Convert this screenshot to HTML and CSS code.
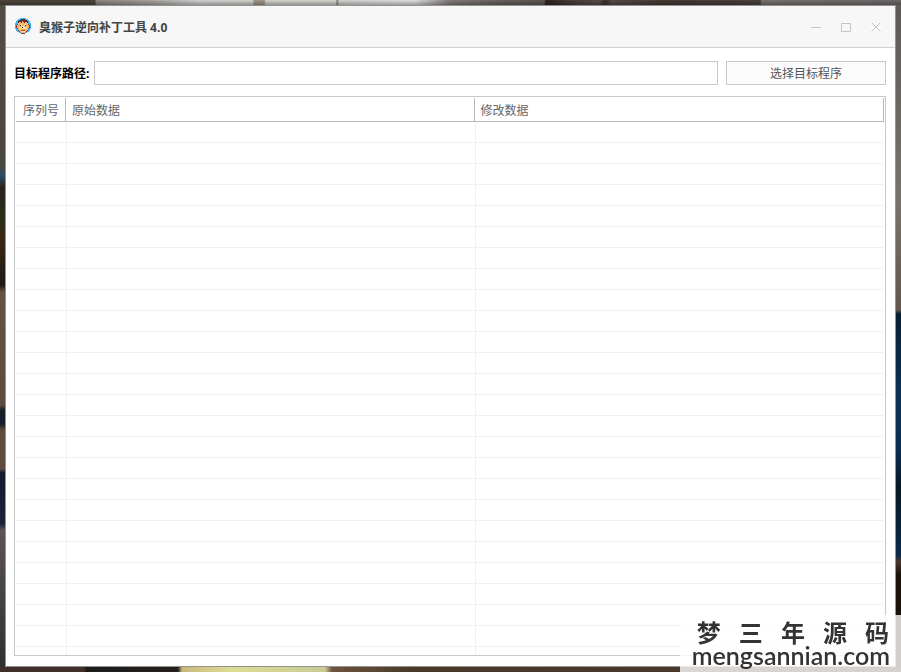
FILE: index.html
```
<!DOCTYPE html>
<html lang="zh-CN">
<head>
  <meta charset="UTF-8">
  <title>臭猴子逆向补丁工具 4.0</title>
  <meta name="viewport" content="width=device-width, initial-scale=1.0">
  <link rel="stylesheet" href="styles.css">
</head>
<body>

  <main class="window">
    <header class="titlebar">
      <svg class="logo" viewBox="0 0 16 16" shape-rendering="crispEdges" aria-hidden="true">
        <path fill="#3fb4f5" d="M5 0h6v1h2v1h1v1h1v2h1v6h-1v2h-1v1h-2v1h-2v1H6v-1H4v-1H2v-1H1v-2H0V5h1V3h1V2h1V1h2z"/>
        <path fill="#f6b46c" d="M4 3h8v2h1v2h1v3h-1v2h-1v2h-2v1H6v-1H4v-2H3v-2H2V7h1V5h1z"/>
        <path fill="#ffdc9c" d="M5 6h2v2H5zM9 6h2v2H9zM4 9h3v2H4zM9 9h3v2H9zM7 8h2v3H7zM6 13h4v1H6z"/>
        <path fill="#6b2a2a" d="M6 1h4v1h2v1h1v2h-1v-1h-2v1H9V4H8V3H7v2H6V4H4v1H3V3h1V2h2z"/>
        <path fill="#8f3c22" d="M2 6h1v1H2zM13 6h1v1h-1zM1 7h1v3H1zM14 7h1v3h-1zM2 10h1v1H2zM13 10h1v1h-1zM3 12h1v1H3zM12 12h1v1h-1zM4 13h1v1H4zM11 13h1v1h-1zM6 15h4v1H6z"/>
        <path fill="#3c1c1c" d="M5 7h1v1H5zM10 7h1v1h-1zM7 9h1v1H7z"/>
        <path fill="#b4482c" d="M6 12h4v1H6z"/>
      </svg>
      <h1 class="title">臭猴子逆向补丁工具 4.0</h1>
      <div class="controls">
        <button type="button" class="control" aria-label="最小化">
          <svg viewBox="0 0 10 10"><path d="M0 5.5h10"/></svg>
        </button>
        <button type="button" class="control" aria-label="最大化">
          <svg viewBox="0 0 10 10"><path d="M.5 1.5h9v8h-9z"/></svg>
        </button>
        <button type="button" class="control" aria-label="关闭">
          <svg viewBox="0 0 10 10"><path d="M.5 .5l9 9M9.5 .5l-9 9"/></svg>
        </button>
      </div>
    </header>

    <div class="toolbar">
      <label class="path-label" for="path">目标程序路径:</label>
      <input class="path" type="text" id="path">
      <button type="button" class="choose">选择目标程序</button>
    </div>

    <div class="list">
      <table class="grid">
        <colgroup>
          <col class="col-index">
          <col>
          <col>
        </colgroup>
        <thead>
          <tr><th>序列号</th><th>原始数据</th><th>修改数据</th></tr>
        </thead>
        <tbody id="rows"></tbody>
      </table>
    </div>
  </main>

  <div class="watermark">
    <div class="mark-name"><span>梦</span><span>三</span><span>年</span><span>源</span><span>码</span></div>
    <div class="mark-site">mengsannian.com</div>
  </div>

<script>
// Fill the list with empty rows, the last one is cut off by the frame
const rows = document.getElementById('rows');
const count = Math.ceil(rows.closest('.list').clientHeight / 21);

for (let i = 0; i < count; i++) {
  const row = rows.insertRow();
  for (let j = 0; j < 3; j++) row.insertCell();
}
</script>

</body>
</html>
```

FILE: styles.css
```
* {
  box-sizing: border-box;
}
body {
  display: flex;
  height: 100vh;
  margin: 0;
  padding: 5px;
  overflow: hidden;
  font-family: "Open Sans", "Noto Sans CJK SC", sans-serif;
  font-size: 12px;
  /* desktop wallpaper seen round the window: shadow first, then top, bottom, left, right */
  background:
    linear-gradient(transparent, rgba(0, 0, 0, 0.3)) top / 100% 5px no-repeat,
    linear-gradient(90deg, #4e463d 95px, #8d8580 96px, #a8a39e 150px, #d0d2d0 200px, #d0d0cb 253px, #a09688 254px, #a09688 264px, #d4d4cc 266px, #d4d4cc 336px, #77705f 337px, #d0d2cf 339px, #e0e0e0 415px, #827c7a 450px, #686260 500px, #5c574f 544px, #30211e 546px, #4a3c3a 570px, #594a4a 600px, #3c302b 605px, #594a4a 612px, #453832 660px, #4b413b 760px, #777370 762px, #6d6968 100%) top / 100% 5px no-repeat,
    linear-gradient(90deg, #402e28 84px, #1c1b1a 86px, #25201d 178px, #c8b87a 182px, #dedc94 230px, #c9cb94 325px, #6d543e 332px, #463727 420px, #49382a 682px, #2c1c14 100%) bottom / 100% 5px no-repeat,
    linear-gradient(#544c40, #4a4640 165px, #2e4a66 176px, #2b2018 188px, #26301c 215px, #3a2815 235px, #201812 285px, #665143 292px, #5d4b3f 405px, #15202c 410px, #15202c 424px, #5d4b3f 430px, #5d4b3f 469px, #101b30 473px, #1a2438 524px, #5a5554 530px, #302d2c 100%) left / 5px 100% no-repeat,
    linear-gradient(#5c5958, #77736c 200px, #62564e 310px, #081f33 314px, #0c3157 400px, #0a2c50 450px, #051824 490px, #0b2a4a 555px, #4a372b 562px, #1a110b 575px) right / 5px 100% no-repeat,
    #444;
}
button, input {
  font: inherit;
}
.window {
  flex: 1;
  display: flex;
  flex-direction: column;
  min-width: 0;
  border: 1px solid #939393;
  background-color: #fff;
}
.titlebar {
  display: flex;
  align-items: center;
  gap: 8px;
  height: 42px;
  padding: 0 4px 0 9px;
  border-bottom: 1px solid #d0d0d0;
  background-color: #f7f7f7;
}
.logo {
  width: 16px;
  height: 16px;
  margin-bottom: 2px;
}
.title {
  flex: 1;
  margin: 0;
  padding-top: 2px;
  font-size: 12px;
  line-height: 18px;
  color: #444;
}
.controls {
  display: flex;
}
.control {
  display: flex;
  align-items: center;
  justify-content: center;
  width: 30px;
  height: 30px;
  padding: 0;
  border: none;
  background: none;
}
.control svg {
  width: 10px;
  height: 10px;
  fill: none;
  stroke: #c4c4c4;
}
.toolbar {
  display: flex;
  align-items: center;
  gap: 8px;
  padding: 13px 9px 11px 8px;
}
.path-label {
  margin-right: -3px;
  font-weight: bold;
  white-space: nowrap;
  color: #000;
}
.path {
  flex: 1;
  min-width: 0;
  height: 24px;
  padding: 0 4px;
  border: 1px solid #c8c8c8;
  outline: none;
}
.choose {
  width: 160px;
  height: 24px;
  padding: 2px 0 0;
  border: 1px solid #c8c8c8;
  background-color: #fcfcfc;
  line-height: 18px;
  color: #555;
}
.list {
  flex: 1;
  min-height: 0;
  margin: 0 9px 10px 8px;
  padding: 1px;
  border: 1px solid #c8c8c8;
  overflow: clip;
  overflow-clip-margin: content-box;
}
.grid {
  width: 100%;
  table-layout: fixed;
  border-collapse: separate;
  border-spacing: 0;
}
.col-index {
  width: 51px;
}
.grid th {
  height: 24px;
  padding: 2px 5px 0;
  border-bottom: 1px solid #b8b8b8;
  /* divider stands one pixel left of the cell edge */
  background: linear-gradient(#b8b8b8, #b8b8b8) right 1px top / 1px 100% no-repeat;
  font-weight: normal;
  line-height: 18px;
  text-align: left;
  white-space: nowrap;
  color: #666;
}
.grid th:first-child {
  padding-left: 7px;
}
.grid th:last-child {
  background-position: right top;
}
.grid td {
  height: 21px;
  padding: 0;
  border-right: 1px solid #f0f0f0;
  border-bottom: 1px solid #f0f0f0;
}
.grid td:last-child {
  border-right: none;
}
.watermark {
  position: fixed;
  right: 0;
  bottom: 0;
  padding: 4px 11px 7px 12px;
  background-color: rgba(255, 255, 255, 0.8);
  color: #333;
}
.mark-name {
  display: flex;
  justify-content: space-between;
  padding: 0 1px 0 5px;
  font-family: "Noto Sans CJK SC", sans-serif;
  font-size: 24px;
  font-weight: bold;
  line-height: 26px;
}
.mark-site {
  font-family: Lato, sans-serif;
  font-size: 25px;
  font-weight: 600;
  line-height: 20px;
}
```
